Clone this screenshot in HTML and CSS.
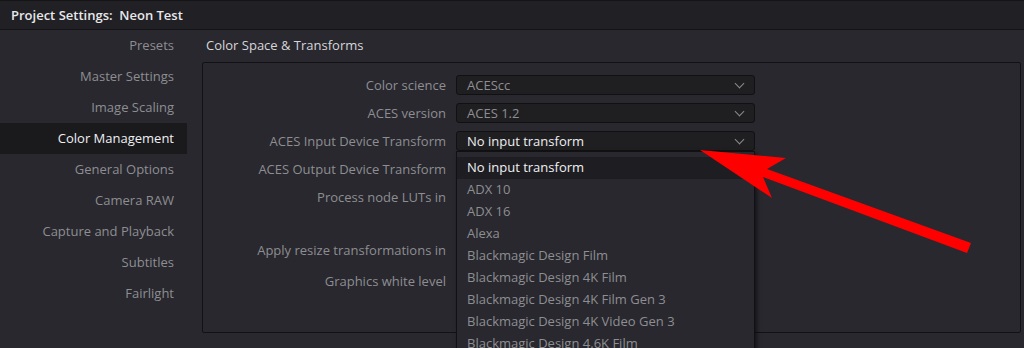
FILE: index.html
```html
<!DOCTYPE html>
<html lang="en">
<head>
<meta charset="UTF-8">
<title>Project Settings</title>
<link rel="stylesheet" href="styles.css">
</head>
<body>

<!-- title bar -->
<div class="titlebar">Project Settings:&nbsp; Neon Test</div>

<div class="main">
    <!-- left menu -->
    <div class="sidebar">
        <div class="nav-item">Presets</div>
        <div class="nav-item">Master Settings</div>
        <div class="nav-item">Image Scaling</div>
        <div class="nav-item active">Color Management</div>
        <div class="nav-item">General Options</div>
        <div class="nav-item">Camera RAW</div>
        <div class="nav-item">Capture and Playback</div>
        <div class="nav-item">Subtitles</div>
        <div class="nav-item">Fairlight</div>
    </div>

    <!-- settings -->
    <div class="content">
        <div class="section-title">Color Space &amp; Transforms</div>
        <div class="panel">
            <div class="row">
                <span class="label">Color science</span>
                <div class="select"><span>ACEScc</span><span class="chev"></span></div>
            </div>
            <div class="row">
                <span class="label">ACES version</span>
                <div class="select"><span>ACES 1.2</span><span class="chev"></span></div>
            </div>
            <div class="row">
                <span class="label">ACES Input Device Transform</span>
                <div class="select open"><span>No input transform</span><span class="chev"></span></div>
            </div>
            <div class="row">
                <span class="label">ACES Output Device Transform</span>
            </div>
            <div class="row">
                <span class="label">Process node LUTs in</span>
            </div>
            <div class="row gap-top">
                <span class="label">Apply resize transformations in</span>
            </div>
            <div class="row tight">
                <span class="label">Graphics white level</span>
            </div>
        </div>
    </div>
</div>

<!-- open dropdown list -->
<div class="dropdown-list">
    <div class="option selected">No input transform</div>
    <div class="option">ADX 10</div>
    <div class="option">ADX 16</div>
    <div class="option">Alexa</div>
    <div class="option">Blackmagic Design Film</div>
    <div class="option">Blackmagic Design 4K Film</div>
    <div class="option">Blackmagic Design 4K Film Gen 3</div>
    <div class="option">Blackmagic Design 4K Video Gen 3</div>
    <div class="option">Blackmagic Design 4.6K Film</div>
</div>

<!-- red annotation arrow -->
<svg class="arrow" width="1024" height="348" viewBox="0 0 1024 348">
    <polygon fill="#ff0000" points="700,150 786,158 767,169 971,243 967,253 763,177 772,198"/>
</svg>

</body>
</html>
```

FILE: styles.css
```css
html, body {
    margin: 0;
    padding: 0;
}
body {
    width: 1024px;
    height: 348px;
    overflow: hidden;
    position: relative;
    background-color: #28282e;
    font-family: "Open Sans", "Noto Sans", sans-serif;
    font-size: 13px;
    color: #8e8e92;
}
/* title bar */
.titlebar {
    height: 30px;
    line-height: 28px;
    padding-left: 11px;
    background-color: #202025;
    border-top: 1px solid #151518;
    border-bottom: 1px solid #141416;
    box-sizing: border-box;
    color: #e8e8ea;
    font-weight: 600;
}
.main {
    display: flex;
}
/* left menu */
.sidebar {
    width: 187px;
    flex-shrink: 0;
}
.nav-item {
    height: 31px;
    line-height: 31px;
    text-align: right;
    padding-right: 13px;
}
.nav-item.active {
    background-color: #1a1a1d;
    color: #f0f0f2;
}
/* settings */
.content {
    flex: 1;
    padding-left: 15px;
    padding-right: 3px;
}
.section-title {
    height: 32px;
    line-height: 31px;
    padding-left: 4px;
    color: #d6d6da;
}
.panel {
    height: 271px;
    border: 1px solid #121214;
    border-radius: 2px;
    background-color: #28282e;
    padding-top: 8px;
    box-sizing: border-box;
}
.row {
    height: 28px;
    display: flex;
    align-items: center;
}
.row.gap-top {
    margin-top: 25px;
}
.row.tight {
    margin-top: 3px;
}
.label {
    width: 243px;
    text-align: right;
    padding-right: 10px;
    flex-shrink: 0;
}
.select {
    width: 299px;
    height: 20px;
    box-sizing: border-box;
    border: 1px solid #111113;
    border-radius: 3px;
    background-color: #1f1f22;
    display: flex;
    align-items: center;
    justify-content: space-between;
    padding: 0 11px 0 10px;
    color: #8e8e92;
}
.select.open {
    color: #eeeef0;
}
.chev {
    width: 6px;
    height: 6px;
    border-right: 1.5px solid #8a8a8e;
    border-bottom: 1.5px solid #8a8a8e;
    transform: rotate(45deg);
    margin-top: -4px;
}
/* open dropdown */
.dropdown-list {
    position: absolute;
    left: 456px;
    top: 151px;
    width: 299px;
    height: 210px;
    box-sizing: border-box;
    padding-top: 5px;
    background-color: #28282e;
    border: 1px solid #111113;
    box-shadow: 2px 2px 4px rgba(0, 0, 0, 0.5);
}
.option {
    height: 22px;
    line-height: 21px;
    padding-left: 10px;
    color: #8e8e92;
}
.option.selected {
    background-color: #1e1e22;
    color: #f0f0f2;
}
.arrow {
    position: absolute;
    left: 0;
    top: 0;
}
```
